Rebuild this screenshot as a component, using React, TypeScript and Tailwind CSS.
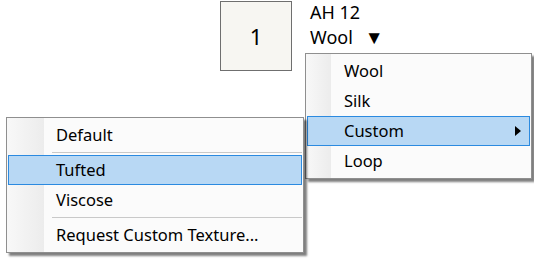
import React from 'react';

type Item = { label: string; active?: boolean; submenu?: boolean; sep?: boolean };

const MATERIALS: Item[] = [
  { label: 'Wool' },
  { label: 'Silk' },
  { label: 'Custom', active: true, submenu: true },
  { label: 'Loop' },
];

const TEXTURES: Item[] = [
  { label: 'Default' },
  { label: '', sep: true },
  { label: 'Tufted', active: true },
  { label: 'Viscose' },
  { label: '', sep: true },
  { label: 'Request Custom Texture...' },
];

type MenuProps = { items: Item[]; className: string; gutter: string; pad: string; sepPad: string };

const MenuList: React.FC<MenuProps> = ({ items, className, gutter, pad, sepPad }) => (
  <div
    className={`absolute border border-[#8f8f8f] bg-[#fbfbfb] py-[2px] shadow-[3px_3px_2px_rgba(0,0,0,0.5)] ${className}`}
  >
    <div className={`absolute bottom-0 left-0 top-0 bg-gradient-to-r from-[#f8f8f8] to-[#ececec] ${gutter}`} />
    {items.map((it, i) =>
      it.sep ? (
        <div key={i} className={`relative flex h-[5px] items-center pr-[1px] ${sepPad}`}>
          <div className="h-px w-full bg-[#c9c9c9]" />
        </div>
      ) : (
        <div
          key={i}
          className={`relative mx-[1px] flex h-[30px] items-center border pr-[8px] ${pad} ${
            it.active ? 'border-[#2b8ae0] bg-[#b8d8f4]' : 'border-transparent'
          }`}
        >
          <span className="flex-1">{it.label}</span>
          {it.submenu && (
            <svg width="6" height="10" viewBox="0 0 6 10">
              <path d="M0 0 L6 5 L0 10 Z" fill="#000" />
            </svg>
          )}
        </div>
      )
    )}
  </div>
);

export default function App() {
  return (
    <div className="relative h-[260px] w-[534px] bg-white font-['Noto_Sans',sans-serif] text-[16.5px] text-black">
      <div className="flex pl-[220px] pt-[1px]">
        <div className="flex h-[70px] w-[72px] items-center justify-center border border-[#6f6f6f] bg-[#f7f6f2] text-[22px]">
          1
        </div>
        <div className="ml-[18px] flex flex-col leading-[22px]">
          <span className="text-[18px]">AH 12</span>
          <span className="mt-[3px] flex items-center text-[18px]">
            Wool
            <span className="ml-[12px] text-[19px] leading-none">▼</span>
          </span>
        </div>
      </div>

      <MenuList
        items={MATERIALS}
        className="left-[305px] top-[53px] w-[227px]"
        gutter="w-[25px]"
        pad="pl-[36px]"
        sepPad="pl-[33px]"
      />
      <MenuList
        items={TEXTURES}
        className="left-[6px] top-[117px] w-[298px]"
        gutter="w-[37px]"
        pad="pl-[47px]"
        sepPad="pl-[45px]"
      />
    </div>
  );
}
